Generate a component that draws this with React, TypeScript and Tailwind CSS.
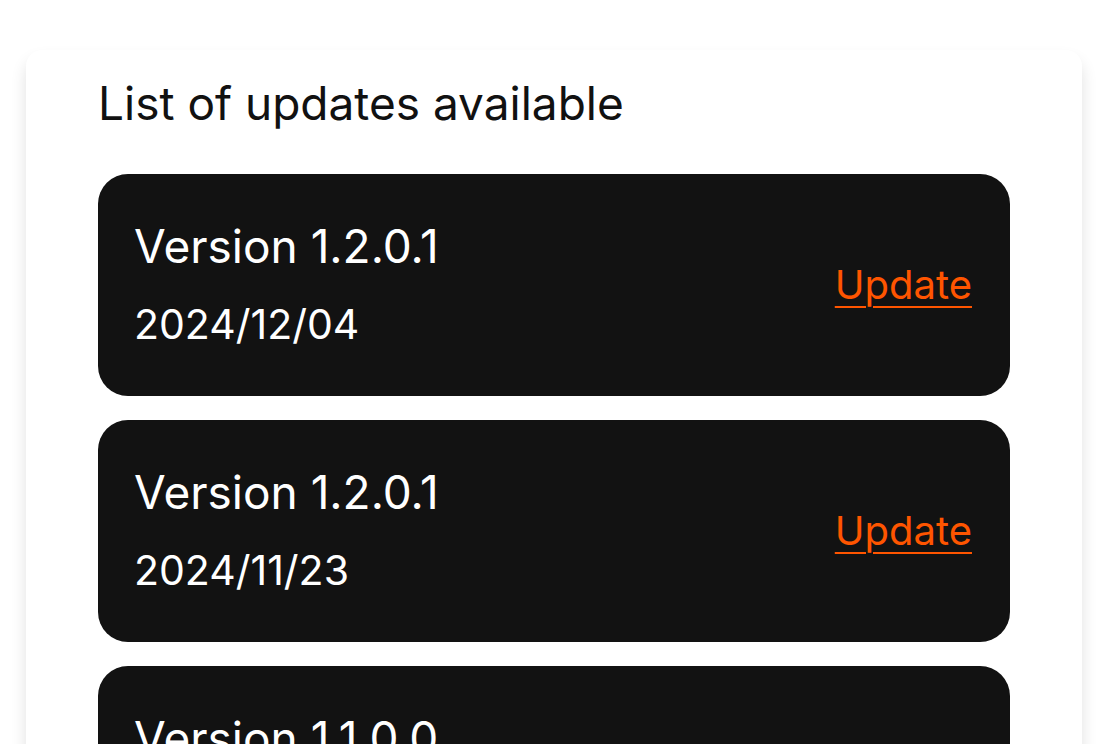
import React from "react";

interface UpdateItem {
  version: string;
  date: string;
}

const updates: UpdateItem[] = [
  { version: "Version 1.2.0.1", date: "2024/12/04" },
  { version: "Version 1.2.0.1", date: "2024/11/23" },
  { version: "Version 1.1.0.0", date: "2024/10/15" },
];

function UpdateCard({ item }: { item: UpdateItem }) {
  return (
    <div className="flex h-[222px] shrink-0 items-center justify-between rounded-[30px] bg-[#121212] pl-[36px] pr-[38px]">
      <div className="flex flex-col self-start pt-[45px]">
        <p className="text-[46px] leading-[1.2] text-white">{item.version}</p>
        <p className="mt-[26px] text-[41px] leading-[1.2] text-white">{item.date}</p>
      </div>
      <button className="text-[40px] leading-[1.2] text-[#ff5500] underline decoration-2 underline-offset-[7px]">
        Update
      </button>
    </div>
  );
}

export default function App() {
  return (
    <div
      className="h-[744px] w-[1105px] overflow-hidden bg-white pt-[50px] pl-[26px]"
      style={{ fontFamily: "Inter, 'Noto Sans', sans-serif" }}
    >
      <div className="flex h-[720px] w-[1056px] flex-col rounded-[16px] bg-white px-[72px] pt-[26px] shadow-[0_10px_16px_rgba(0,0,0,0.12)]">
        <h1 className="text-[46px] font-normal leading-[1.2] text-[#111]">
          List of updates available
        </h1>
        <div className="mt-[43px] flex flex-col gap-[24px]">
          {updates.map((item, idx) => (
            <UpdateCard key={idx} item={item} />
          ))}
        </div>
      </div>
    </div>
  );
}
